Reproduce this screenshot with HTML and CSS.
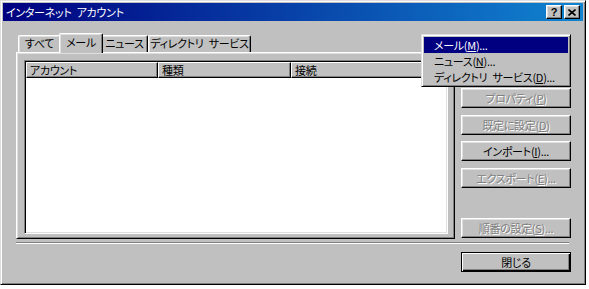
FILE: index.html
```html
<!DOCTYPE html>
<html lang="ja">
<head>
<meta charset="utf-8">
<title>インターネット アカウント</title>
<link rel="stylesheet" href="styles.css">
</head>
<body>
<div class="window">
  <div class="titlebar">
    <span class="title">インターネット アカウント</span>
    <div class="controls">
      <span class="ctl ctl-help">?</span>
      <span class="ctl ctl-close"><svg width="8" height="7" viewBox="0 0 8 7"><path d="M0.5 0.5L7.5 6.5M7.5 0.5L0.5 6.5" stroke="#000" stroke-width="1.6" fill="none"/></svg></span>
    </div>
  </div>
  <div class="main">
    <div class="tabctl">
      <div class="tabs">
        <div class="tab t-all">すべて</div>
        <div class="tab t-mail active">メール</div>
        <div class="tab t-news">ニュース</div>
        <div class="tab t-dir">ディレクトリ サービス</div>
      </div>
      <div class="panel">
        <div class="list">
          <div class="header">
            <div class="col c1">アカウント</div>
            <div class="col c2">種類</div>
            <div class="col c3">接続</div>
          </div>
        </div>
      </div>
    </div>
    <div class="side">
      <div class="btn covered"></div>
      <div class="btn covered"></div>
      <div class="btn disabled">プロパティ(<u>P</u>)</div>
      <div class="btn disabled">既定に設定(<u>D</u>)</div>
      <div class="btn">インポート(<u>I</u>)...</div>
      <div class="btn disabled">エクスポート(<u>E</u>)...</div>
      <div class="btn disabled push">順番の設定(<u>S</u>)...</div>
    </div>
  </div>
  <div class="sep"></div>
  <div class="footer">
    <div class="btn default">閉じる</div>
  </div>
  <div class="menu">
    <div class="item hl">メール(<u>M</u>)...</div>
    <div class="item">ニュース(<u>N</u>)...</div>
    <div class="item">ディレクトリ サービス(<u>D</u>)...</div>
  </div>
</div>
</body>
</html>
```
FILE: styles.css
```css
html, body {
  margin: 0;
  padding: 0;
  background: #ffffff;
}
body {
  font-family: "Noto Sans CJK JP", "Liberation Sans", sans-serif;
  font-size: 11px;
  line-height: 14px;
  letter-spacing: -0.3px;
  word-spacing: 3px;
  font-feature-settings: "palt" 1;
  color: #000;
}
.window {
  position: relative;
  box-sizing: border-box;
  width: 586px;
  height: 285px;
  background: #c0c0c0;
  border: 1px solid;
  border-color: #dfdfdf #000 #000 #dfdfdf;
  box-shadow: inset 1px 1px #fff, inset -1px -1px #808080;
  padding: 2px;
  display: flex;
  flex-direction: column;
}
.titlebar {
  height: 18px;
  background: linear-gradient(to right, #000080, #1084d0);
  display: flex;
  align-items: center;
  justify-content: space-between;
  padding: 0 3px 0 3px;
}
.title {
  color: #fff;
}
.controls {
  display: flex;
  gap: 2px;
}
.ctl {
  box-sizing: border-box;
  width: 16px;
  height: 14px;
  background: #c0c0c0;
  border: 1px solid;
  border-color: #fff #000 #000 #fff;
  box-shadow: inset -1px -1px #808080, inset 1px 1px #dfdfdf;
  display: flex;
  align-items: center;
  justify-content: center;
}
.ctl-help {
  font-family: "Liberation Sans", sans-serif;
  font-weight: bold;
  font-size: 11px;
  line-height: 11px;
  letter-spacing: 0;
}
.main {
  display: flex;
  padding: 12px 0 0 13px;
}
.tabctl {
  width: 439px;
  display: flex;
  flex-direction: column;
}
.tabs {
  display: flex;
  align-items: flex-end;
  height: 19px;
  padding-left: 2px;
}
.tab {
  box-sizing: border-box;
  height: 17px;
  border-left: 1px solid #fff;
  border-top: 1px solid #fff;
  border-right: 1px solid #000;
  border-top-left-radius: 2px;
  border-top-right-radius: 2px;
  box-shadow: inset -1px 0 #808080, inset 1px 1px #dfdfdf;
  text-align: center;
  line-height: 15px;
  white-space: nowrap;
}
.t-all { width: 43px; }
.t-mail { width: 40px; }
.t-news { width: 47px; }
.t-dir { width: 103px; }
.tab.active {
  position: relative;
  z-index: 1;
  width: 44px;
  height: 20px;
  margin: 0 -2px -1px;
  background: #c0c0c0;
  line-height: 17px;
}
.panel {
  box-sizing: border-box;
  height: 187px;
  border: 1px solid;
  border-color: #fff #000 #000 #fff;
  box-shadow: inset 1px 1px #dfdfdf, inset -1px -1px #808080;
  padding: 7px 6px 4px 7px;
}
.list {
  box-sizing: border-box;
  height: 174px;
  background: #fff;
  border: 1px solid;
  border-color: #808080 #fff #fff #808080;
  box-shadow: inset 1px 1px #000, inset -1px -1px #dfdfdf;
  padding: 1px;
}
.header {
  display: flex;
  height: 16px;
}
.col {
  box-sizing: border-box;
  height: 16px;
  background: #c0c0c0;
  border: 1px solid;
  border-color: #fff #000 #000 #fff;
  box-shadow: inset -1px -1px #808080;
  padding-left: 3px;
  line-height: 14px;
}
.c1 { width: 132px; }
.c2 { width: 133px; }
.c3 { flex: 1; }
.side {
  width: 110px;
  margin-left: 6px;
  padding: 2px 0 1px;
  display: flex;
  flex-direction: column;
  gap: 6.5px;
}
.btn {
  box-sizing: border-box;
  width: 110px;
  height: 20px;
  background: #c0c0c0;
  border: 1px solid;
  border-color: #fff #000 #000 #fff;
  box-shadow: inset -1px -1px #808080, inset 1px 1px #dfdfdf;
  text-align: center;
  line-height: 18px;
  white-space: nowrap;
}
.btn.disabled {
  color: #808080;
  text-shadow: 1px 1px 0 #fff;
}
.btn.push {
  margin-top: auto;
}
.btn.default {
  border-color: #000;
  box-shadow: inset 1px 1px #fff, inset -1px -1px #000, inset -2px -2px #808080;
}
.sep {
  margin: 3px 0 0 13px;
  width: 553px;
  border-top: 1px solid #808080;
  border-bottom: 1px solid #fff;
}
.footer {
  display: flex;
  justify-content: flex-end;
  padding: 8px 12px 0 0;
}
.menu {
  position: absolute;
  left: 420px;
  top: 33px;
  box-sizing: border-box;
  width: 150px;
  height: 53px;
  background: #c0c0c0;
  border: 1px solid;
  border-color: #dfdfdf #000 #000 #dfdfdf;
  box-shadow: inset 1px 1px #fff, inset -1px -1px #808080;
  padding: 2px;
  z-index: 5;
}
.item {
  height: 16px;
  line-height: 16px;
  padding-left: 10px;
  white-space: nowrap;
}
.item.hl {
  background: #000080;
  color: #fff;
}
```
